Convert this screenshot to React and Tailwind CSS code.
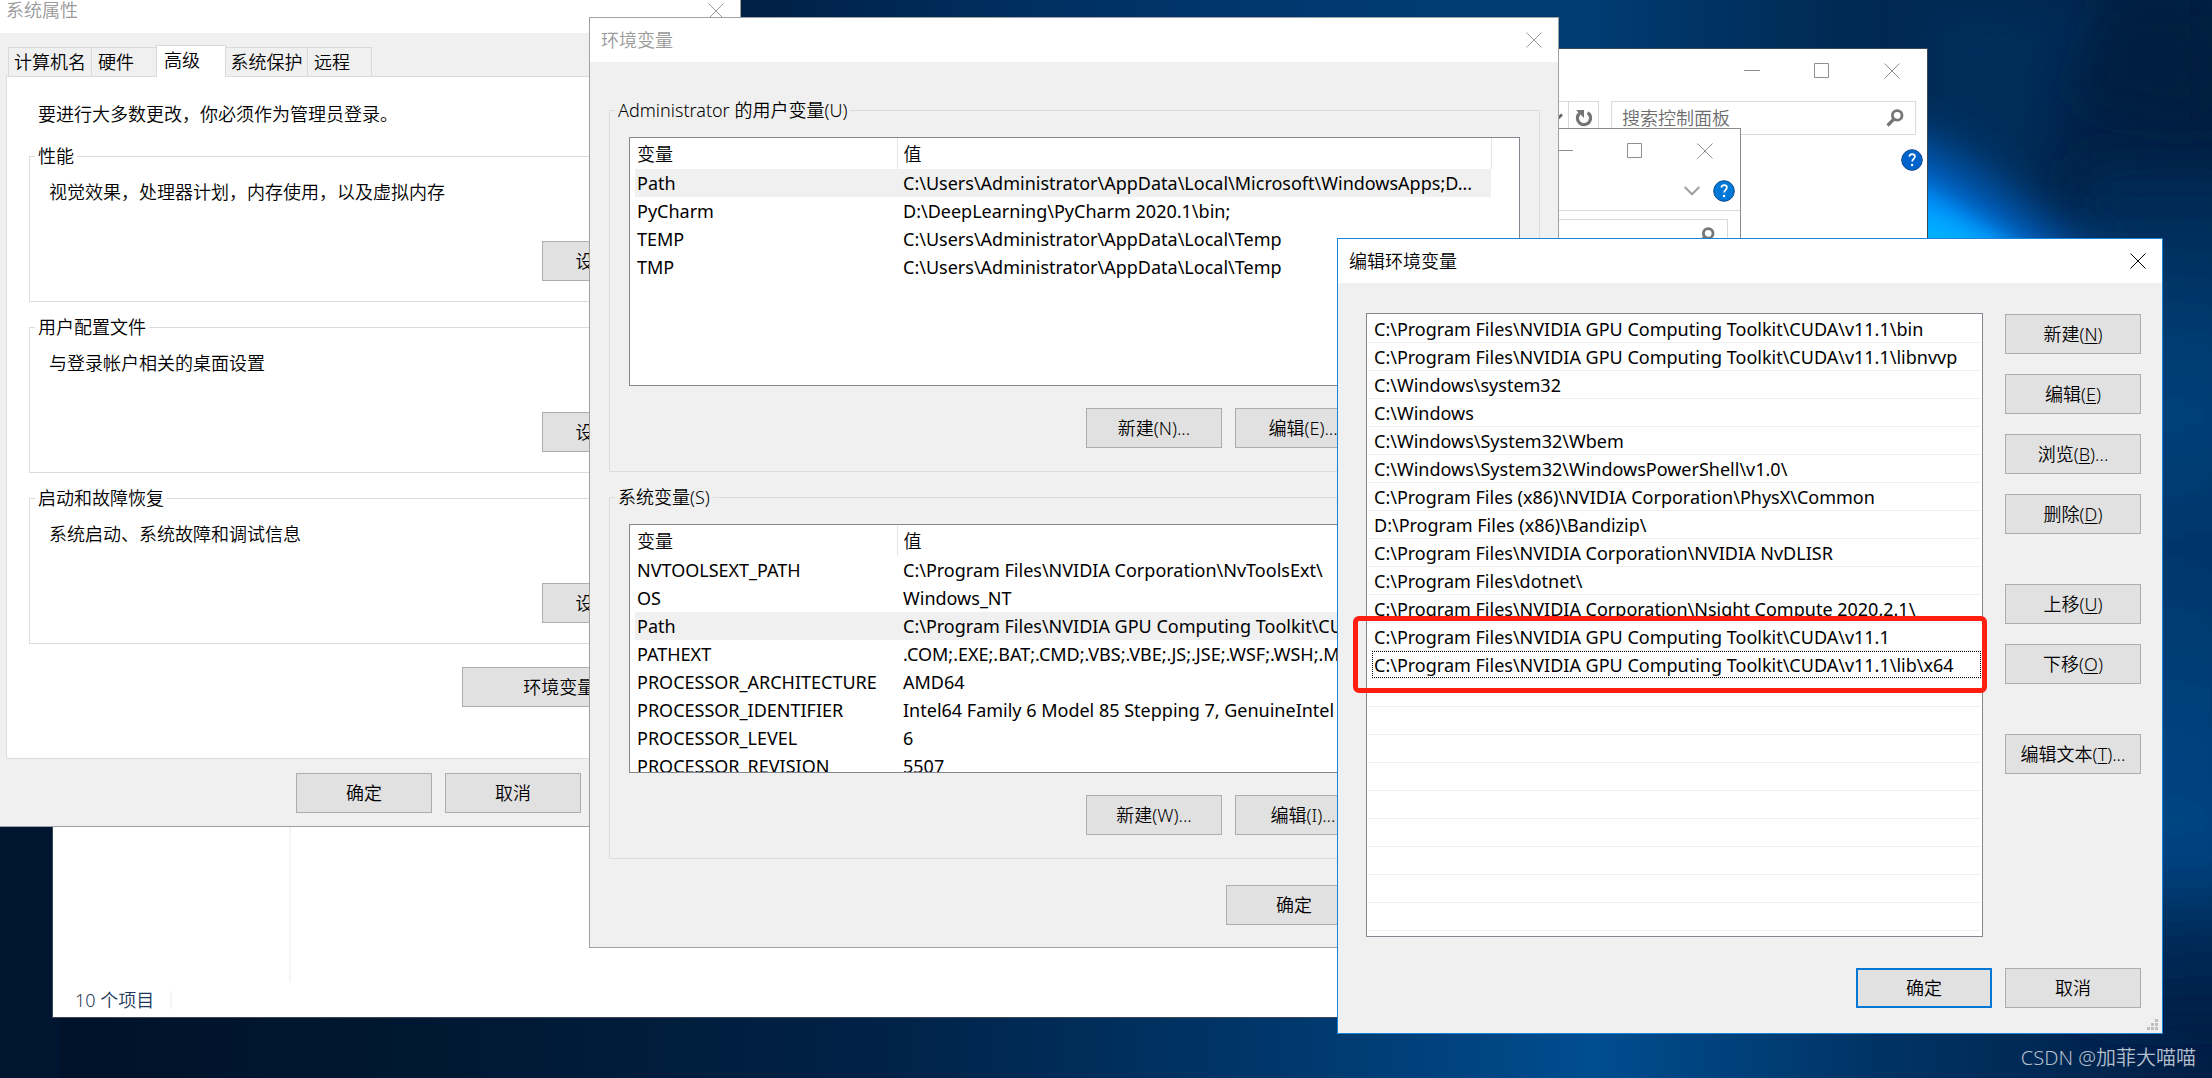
const userVariables = [
  ['Path', 'C:\\Users\\Administrator\\AppData\\Local\\Microsoft\\WindowsApps;D...'],
  ['PyCharm', 'D:\\DeepLearning\\PyCharm 2020.1\\bin;'],
  ['TEMP', 'C:\\Users\\Administrator\\AppData\\Local\\Temp'],
  ['TMP', 'C:\\Users\\Administrator\\AppData\\Local\\Temp'],
];

const systemVariables = [
  ['NVTOOLSEXT_PATH', 'C:\\Program Files\\NVIDIA Corporation\\NvToolsExt\\'],
  ['OS', 'Windows_NT'],
  ['Path', 'C:\\Program Files\\NVIDIA GPU Computing Toolkit\\CUDA\\v11.1\\bin'],
  ['PATHEXT', '.COM;.EXE;.BAT;.CMD;.VBS;.VBE;.JS;.JSE;.WSF;.WSH;.MSC'],
  ['PROCESSOR_ARCHITECTURE', 'AMD64'],
  ['PROCESSOR_IDENTIFIER', 'Intel64 Family 6 Model 85 Stepping 7, GenuineIntel'],
  ['PROCESSOR_LEVEL', '6'],
  ['PROCESSOR_REVISION', '5507'],
];

const pathEntries = [
  'C:\\Program Files\\NVIDIA GPU Computing Toolkit\\CUDA\\v11.1\\bin',
  'C:\\Program Files\\NVIDIA GPU Computing Toolkit\\CUDA\\v11.1\\libnvvp',
  'C:\\Windows\\system32',
  'C:\\Windows',
  'C:\\Windows\\System32\\Wbem',
  'C:\\Windows\\System32\\WindowsPowerShell\\v1.0\\',
  'C:\\Program Files (x86)\\NVIDIA Corporation\\PhysX\\Common',
  'D:\\Program Files (x86)\\Bandizip\\',
  'C:\\Program Files\\NVIDIA Corporation\\NVIDIA NvDLISR',
  'C:\\Program Files\\dotnet\\',
  'C:\\Program Files\\NVIDIA Corporation\\Nsight Compute 2020.2.1\\',
  'C:\\Program Files\\NVIDIA GPU Computing Toolkit\\CUDA\\v11.1',
  'C:\\Program Files\\NVIDIA GPU Computing Toolkit\\CUDA\\v11.1\\lib\\x64',
];
const pathRows = [...pathEntries, ...Array(9).fill('')];

function CloseIcon() {
  return (
    <svg className="size-4" viewBox="0 0 16 16" fill="none" stroke="currentColor" aria-hidden="true">
      <path d="M0.5 0.5l15 15M15.5 0.5l-15 15" />
    </svg>
  );
}

function CloseButton({ className }) {
  return (
    <button type="button" aria-label="关闭" className={`grid w-12 shrink-0 place-items-center ${className}`}>
      <CloseIcon />
    </button>
  );
}

function CaptionButtons() {
  return (
    <div className="flex h-[43px] justify-end text-[#8f8f8f]">
      <button type="button" aria-label="最小化" className="grid w-[70px] place-items-center">
        <svg className="size-4" viewBox="0 0 16 16" stroke="currentColor" aria-hidden="true">
          <path d="M0 7.5h16" />
        </svg>
      </button>
      <button type="button" aria-label="最大化" className="grid w-[70px] place-items-center">
        <svg className="size-4" viewBox="0 0 16 16" fill="none" stroke="currentColor" aria-hidden="true">
          <path d="M0.5 0.5h14v14h-14z" />
        </svg>
      </button>
      <button type="button" aria-label="关闭" className="grid w-[70px] place-items-center">
        <CloseIcon />
      </button>
    </div>
  );
}

function SearchIcon() {
  return (
    <svg className="size-[18px] shrink-0" viewBox="0 0 18 18" fill="none" stroke="#757575" aria-hidden="true">
      <circle cx="11.2" cy="6.4" r="4.8" strokeWidth="2.8" />
      <path d="M8 10L1.5 16.5" strokeWidth="3.2" />
    </svg>
  );
}

function HelpIcon({ className }) {
  return (
    <svg className={`size-[22px] ${className}`} viewBox="0 0 22 22" fill="none" aria-hidden="true">
      <circle cx="11" cy="11" r="10.3" fill="currentColor" stroke="#0a4a8c" />
      <path d="M8.3 7.6c.3-1.6 1.3-2.4 2.8-2.4 1.7 0 2.8 1 2.8 2.4 0 2.2-2.7 2.4-2.7 5" stroke="#fff" strokeWidth="1.7" />
      <circle cx="11.1" cy="16" r="1.2" fill="#fff" />
    </svg>
  );
}

function PushButton({ children, className = 'w-[136px]', isDefault = false }) {
  return (
    <button
      type="button"
      className={`h-10 shrink-0 whitespace-nowrap bg-[#e1e1e1] ${
        isDefault ? 'border-2 border-[#0078d7]' : 'border border-[#adadad]'
      } ${className}`}
    >
      {children}
    </button>
  );
}

function Wallpaper() {
  return (
    <svg className="absolute inset-0 size-full" viewBox="0 0 2212 1078" preserveAspectRatio="none" aria-hidden="true">
      <defs>
        <linearGradient id="top" x1="0" x2="1" y1="0" y2="0">
          <stop offset="0" stopColor="#001128" />
          <stop offset="0.33" stopColor="#001f43" />
          <stop offset="0.46" stopColor="#002e60" />
          <stop offset="0.6" stopColor="#003a70" />
          <stop offset="0.72" stopColor="#003c72" />
          <stop offset="0.83" stopColor="#002a54" />
          <stop offset="0.92" stopColor="#00244a" />
          <stop offset="1" stopColor="#001f42" />
        </linearGradient>
        <linearGradient id="bottom" x1="0" x2="1" y1="0" y2="0">
          <stop offset="0" stopColor="#001128" />
          <stop offset="0.2" stopColor="#001832" />
          <stop offset="0.4" stopColor="#002247" />
          <stop offset="0.6" stopColor="#003a70" />
          <stop offset="0.72" stopColor="#004d90" />
          <stop offset="0.85" stopColor="#003364" />
          <stop offset="1" stopColor="#001e45" />
        </linearGradient>
        <linearGradient id="right" x1="0" x2="0" y1="0" y2="1">
          <stop offset="0" stopColor="#00254d" />
          <stop offset="0.2" stopColor="#003a70" />
          <stop offset="0.3" stopColor="#00407a" />
          <stop offset="0.45" stopColor="#003569" />
          <stop offset="0.65" stopColor="#00417c" />
          <stop offset="0.8" stopColor="#004585" />
          <stop offset="0.9" stopColor="#002b58" />
          <stop offset="1" stopColor="#001e45" />
        </linearGradient>
        <filter id="soft" x="-50%" y="-50%" width="200%" height="200%">
          <feGaussianBlur stdDeviation="24" />
        </filter>
        <filter id="glow" x="-50%" y="-50%" width="200%" height="200%">
          <feGaussianBlur stdDeviation="12" />
        </filter>
      </defs>
      <rect width="2212" height="540" fill="url(#top)" />
      <rect y="540" width="2212" height="538" fill="url(#bottom)" />
      <rect x="2080" y="160" width="170" height="860" fill="url(#right)" filter="url(#soft)" />
      <path d="M1925 0L2110 0L2010 240L1925 260Z" fill="#003567" opacity="0.5" filter="url(#soft)" />
      <path d="M2110 0H2212V130L2070 100Z" fill="#001b3c" opacity="0.6" filter="url(#soft)" />
      <path d="M1860 120L1940 150L2110 270L1860 300Z" fill="#0062c4" filter="url(#soft)" />
      <path d="M1860 170L1930 190L2040 260L1860 290Z" fill="#0096ff" filter="url(#glow)" />
      <path d="M1860 216L1940 222L2020 260L1860 270Z" fill="#00b4ff" filter="url(#glow)" />
      <path d="M0 820H60V1078H0Z" fill="#001530" />
    </svg>
  );
}

function ExplorerWindow() {
  return (
    <section className="absolute bottom-[60px] left-[52px] right-[284px] top-12 flex flex-col border border-[#3a4653] bg-white">
      <CaptionButtons />
      <div className="mt-[9px] flex h-[34px] pl-28 pr-[11px]">
        <div className="flex flex-1 justify-end border border-[#d9d9d9]">
          <button type="button" aria-label="展开地址栏" className="grid w-6 place-items-center">
            <svg className="size-[14px]" viewBox="0 0 14 14" fill="none" stroke="#666" strokeWidth="2.6" aria-hidden="true">
              <path d="M1 3.5l6 6 6-6" />
            </svg>
          </button>
          <button type="button" aria-label="刷新" className="grid w-[30px] place-items-center border-l border-[#d9d9d9]">
            <svg className="size-[18px]" viewBox="0 0 18 18" fill="none" aria-hidden="true">
              <path d="M12.6 3.6A6.6 6.6 0 1 1 4.6 4.2" stroke="#757575" strokeWidth="3.2" />
              <path d="M1 1h8v8z" fill="#757575" />
            </svg>
          </button>
        </div>
        <label className="ml-3 flex w-[305px] items-center border border-[#d9d9d9] pl-2.5 pr-[11px]">
          <input
            type="text"
            aria-label="搜索控制面板"
            placeholder="搜索控制面板"
            className="min-w-0 flex-1 outline-none placeholder:text-[#6d6d6d]"
          />
          <SearchIcon />
        </label>
      </div>
      <div className="flex flex-1">
        <div className="w-[238px] border-r-2 border-[#f5f5f5]" />
        <div className="flex flex-1 items-start justify-end pr-1 pt-[14px]">
          <button type="button" aria-label="帮助">
            <HelpIcon className="text-[#0063cc]" />
          </button>
        </div>
      </div>
      <footer className="flex h-[35px] items-center pl-[22px] text-[#1e395b]">
        <span className="border-r-2 border-[#f5f5f5] pr-4 leading-[18px]">10 个项目</span>
      </footer>
    </section>
  );
}

function FolderWindow() {
  return (
    <section className="absolute bottom-[400px] left-[900px] right-[471px] top-32 border border-[#8c8c8c] bg-white">
      <CaptionButtons />
      <div className="flex h-[39px] items-center justify-end gap-[13px] border-b border-[#d9d9d9] pr-[5px]">
        <button type="button" aria-label="展开功能区">
          <svg className="h-[10px] w-4" viewBox="0 0 16 10" fill="none" stroke="#a0a0a0" strokeWidth="2" aria-hidden="true">
            <path d="M0.7 1L8 8.3 15.3 1" />
          </svg>
        </button>
        <button type="button" aria-label="帮助">
          <HelpIcon className="text-[#0078d7]" />
        </button>
      </div>
      <div className="ml-28 mr-3 mt-2 flex h-[34px] items-center justify-end border border-[#d9d9d9] pr-3">
        <SearchIcon />
      </div>
    </section>
  );
}

const tabClass = 'mt-0.5 border-t border-r border-[#d9d9d9]';

function SettingsGroup({ title, text, className }) {
  return (
    <fieldset className={`ml-[22px] mr-[27px] border border-[#dcdcdc] pb-5 pl-[19px] pr-[27px] ${className}`}>
      <legend className="-ml-[14px] px-[3px]">{title}</legend>
      <p className="mt-2">{text}</p>
      <div className="mt-[35px] flex justify-end">
        <PushButton>设置(S)...</PushButton>
      </div>
    </fieldset>
  );
}

function SystemProperties() {
  return (
    <section className="absolute left-0 right-[1471px] top-0 border-b border-r border-[#a0a0a0] bg-[#f0f0f0]">
      <header className="flex h-[33px] justify-between bg-white pb-3 pl-1.5 leading-[21px] text-[#999]">
        <h2>系统属性</h2>
        <CloseButton className="text-[#999]" />
      </header>
      <div role="tablist" className="flex h-[43px] pl-2 pt-3">
        <button type="button" role="tab" className={`${tabClass} w-[84px] border-l`}>计算机名</button>
        <button type="button" role="tab" className={`${tabClass} w-[65px] pl-1.5 text-left`}>硬件</button>
        <button
          type="button"
          role="tab"
          aria-selected="true"
          className="relative z-10 -mb-px -ml-px w-[70px] border-x border-t border-[#d9d9d9] bg-white pb-1 pl-[7px] text-left"
        >
          高级
        </button>
        <button type="button" role="tab" className={`${tabClass} w-[82px]`}>系统保护</button>
        <button type="button" role="tab" className={`${tabClass} w-16 pl-1.5 text-left`}>远程</button>
      </div>
      <div className="mx-1.5 border border-[#dcdcdc] bg-white pb-[51px] pt-[23px]">
        <p className="pl-[31px]">要进行大多数更改，你必须作为管理员登录。</p>
        <SettingsGroup className="mt-[14px]" title="性能" text="视觉效果，处理器计划，内存使用，以及虚拟内存" />
        <SettingsGroup className="mt-[11px]" title="用户配置文件" text="与登录帐户相关的桌面设置" />
        <SettingsGroup className="mt-[11px]" title="启动和故障恢复" text="系统启动、系统故障和调试信息" />
        <div className="mt-[23px] flex justify-end pr-10">
          <PushButton className="w-[231px]">环境变量(N)...</PushButton>
        </div>
      </div>
      <footer className="flex justify-end gap-[13px] pb-[13px] pr-2.5 pt-[14px]">
        <PushButton>确定</PushButton>
        <PushButton>取消</PushButton>
        <PushButton>应用(A)</PushButton>
      </footer>
    </section>
  );
}

function VariableGroup({ title, rows, selected, create, edit, remove, className = '' }) {
  return (
    <fieldset className={`border border-[#dcdcdc] px-[19px] pb-[23px] ${className}`}>
      <legend className="-ml-[14px] px-[3px]">{title}</legend>
      <div className="mt-[13px] h-[249px] overflow-hidden border border-[#828790] bg-white">
        <table className="w-full table-fixed border-collapse text-left">
          <colgroup>
            <col className="w-[267px]" />
            <col />
            <col className="w-7" />
          </colgroup>
          <thead>
            <tr className="h-[31px]">
              <th className="border-r border-[#e5e5e5] pl-[7px] font-[350]">变量</th>
              <th className="border-r border-[#e5e5e5] pl-1.5 font-[350]">值</th>
              <th aria-label="空列" />
            </tr>
          </thead>
          <tbody className="whitespace-nowrap font-normal leading-7">
            {rows.map(([name, value], i) => (
              <tr key={name}>
                <td className="p-0 pl-[5px]">
                  <div className={i === selected ? 'bg-[#f0f0f0] pl-0.5' : 'pl-0.5'}>{name}</div>
                </td>
                <td className={i === selected ? 'bg-[#f0f0f0] pl-1.5' : 'pl-1.5'}>{value}</td>
                <td />
              </tr>
            ))}
          </tbody>
        </table>
      </div>
      <div className="mt-[22px] flex justify-end gap-[13px]">
        <PushButton>{create}</PushButton>
        <PushButton>{edit}</PushButton>
        <PushButton>{remove}</PushButton>
      </div>
    </fieldset>
  );
}

function EnvironmentVariables() {
  return (
    <section className="absolute left-[589px] right-[653px] top-[17px] border border-[#a0a0a0] bg-[#f0f0f0]">
      <header className="flex h-11 items-stretch justify-between bg-white pl-[11px] text-[#999]">
        <h2 className="self-center">环境变量</h2>
        <CloseButton className="text-[#999]" />
      </header>
      <div className="pb-[22px] pl-[19px] pr-[18px] pt-[34px]">
        <VariableGroup
          title="Administrator 的用户变量(U)"
          rows={userVariables}
          selected={0}
          create="新建(N)..."
          edit="编辑(E)..."
          remove="删除(D)"
        />
        <VariableGroup
          className="mt-[11px]"
          title="系统变量(S)"
          rows={systemVariables}
          selected={2}
          create="新建(W)..."
          edit="编辑(I)..."
          remove="删除(L)"
        />
        <div className="mt-[26px] flex justify-end gap-[13px] pr-[29px]">
          <PushButton>确定</PushButton>
          <PushButton>取消</PushButton>
        </div>
      </div>
    </section>
  );
}

function KeyLabel({ text, accessKey, tail = '' }) {
  return (
    <>
      {text}(<u className="underline-offset-2">{accessKey}</u>){tail}
    </>
  );
}

function EditDialog() {
  return (
    <section className="absolute left-[1337px] right-[49px] top-[238px] border border-[#1883d7] bg-[#f0f0f0]">
      <header className="flex h-11 items-stretch justify-between bg-white pl-[11px]">
        <h2 className="self-center">编辑环境变量</h2>
        <CloseButton className="text-black" />
      </header>
      <div className="flex gap-[22px] pl-7 pr-[21px] pt-[30px]">
        <ul className="h-[624px] min-w-0 flex-1 overflow-hidden border border-[#828790] bg-white px-px pt-px font-normal">
          {pathRows.map((entry, i) => (
            <li key={i} className="h-7 whitespace-nowrap border-b border-[#f0f0f0] pl-1 leading-[29px]">
              {i === pathEntries.length - 1 ? (
                <div className="h-[27px] border border-dotted border-black pl-px leading-[27px]">{entry}</div>
              ) : (
                <div className="pl-0.5">{entry}</div>
              )}
            </li>
          ))}
        </ul>
        <div className="flex flex-col gap-5 pt-px">
          <PushButton><KeyLabel text="新建" accessKey="N" /></PushButton>
          <PushButton><KeyLabel text="编辑" accessKey="E" /></PushButton>
          <PushButton><KeyLabel text="浏览" accessKey="B" tail="..." /></PushButton>
          <PushButton><KeyLabel text="删除" accessKey="D" /></PushButton>
          <PushButton className="mt-[30px] w-[136px]"><KeyLabel text="上移" accessKey="U" /></PushButton>
          <PushButton><KeyLabel text="下移" accessKey="O" /></PushButton>
          <PushButton className="mt-[30px] w-[136px]"><KeyLabel text="编辑文本" accessKey="T" tail="..." /></PushButton>
        </div>
      </div>
      <footer className="flex justify-end gap-[13px] pb-[25px] pr-[21px] pt-[31px]">
        <PushButton isDefault>确定</PushButton>
        <PushButton>取消</PushButton>
      </footer>
      <svg className="absolute bottom-0.5 right-[3px] size-3" viewBox="0 0 12 12" fill="#bfbfbf" aria-hidden="true">
        <path d="M8 0h3v3H8zM4 4h3v3H4zM8 4h3v3H8zM0 8h3v3H0zM4 8h3v3H4zM8 8h3v3H8z" />
      </svg>
      <div className="absolute left-[15px] right-[175px] top-[377px] h-[77px] rounded-md border-[5px] border-[#ff1e0f]" />
    </section>
  );
}

export default function App() {
  return (
    <main className="relative min-h-screen overflow-hidden bg-[#001d40] font-['Noto_Sans','Noto_Sans_CJK_SC',sans-serif] text-lg leading-7 font-[350] text-black">
      <Wallpaper />
      <ExplorerWindow />
      <FolderWindow />
      <SystemProperties />
      <EnvironmentVariables />
      <EditDialog />
      <p className="absolute bottom-[6px] right-4 text-xl leading-7 text-[#b4bfcc]">CSDN @加菲大喵喵</p>
    </main>
  );
}
